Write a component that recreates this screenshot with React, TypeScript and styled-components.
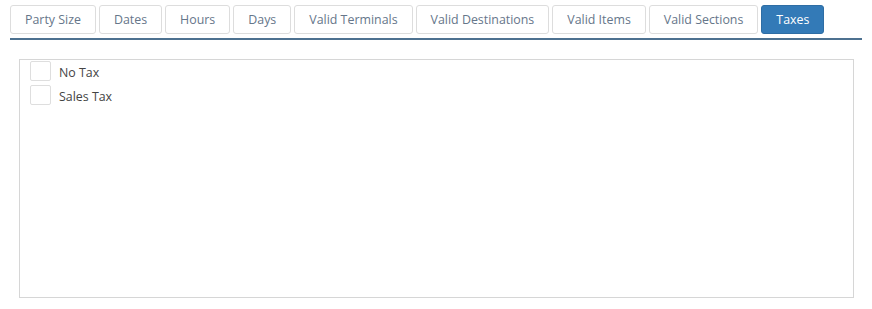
import React, { useState } from "react";
import styled, { createGlobalStyle } from "styled-components";

const GlobalStyle = createGlobalStyle`
  body {
    margin: 0;
    background: #ffffff;
    font-family: "Open Sans", "Noto Sans", sans-serif;
  }
`;

const tabs = [
  "Party Size",
  "Dates",
  "Hours",
  "Days",
  "Valid Terminals",
  "Valid Destinations",
  "Valid Items",
  "Valid Sections",
  "Taxes",
];

const taxes = ["No Tax", "Sales Tax"];

export default function App() {
  const [active, setActive] = useState("Taxes");
  const [checked, setChecked] = useState<Record<string, boolean>>({});

  return (
    <Page>
      <GlobalStyle />
      <TabBar>
        {tabs.map((t) => (
          <Tab key={t} $active={t === active} onClick={() => setActive(t)}>
            {t}
          </Tab>
        ))}
      </TabBar>
      <Panel>
        {taxes.map((t) => (
          <Row key={t}>
            <Box
              $checked={!!checked[t]}
              onClick={() => setChecked({ ...checked, [t]: !checked[t] })}
            />
            <Label>{t}</Label>
          </Row>
        ))}
      </Panel>
    </Page>
  );
}

const Page = styled.div`
  padding: 5px 10px 0 10px;
  width: 852px;
`;

const TabBar = styled.div`
  display: flex;
  flex-direction: row;
  gap: 3px;
  padding-bottom: 4px;
  border-bottom: 2px solid #4d7190;
`;

const Tab = styled.div<{ $active: boolean }>`
  height: 29px;
  box-sizing: border-box;
  padding: 0 14px;
  display: flex;
  align-items: center;
  font-size: 12.4px;
  color: ${(p) => (p.$active ? "#ffffff" : "#66768a")};
  background: ${(p) => (p.$active ? "#337ab7" : "#ffffff")};
  border: 1px solid ${(p) => (p.$active ? "#2e6da4" : "#dddddd")};
  border-radius: 3px;
  cursor: pointer;
  white-space: nowrap;
`;

const Panel = styled.div`
  margin: 19px 8px 0 9px;
  height: 239px;
  box-sizing: border-box;
  border: 1px solid #d6d6d6;
  padding: 1px 10px;
  display: flex;
  flex-direction: column;
  gap: 4px;
`;

const Row = styled.div`
  display: flex;
  flex-direction: row;
  align-items: center;
  gap: 8px;
`;

const Box = styled.div<{ $checked: boolean }>`
  width: 21px;
  height: 20px;
  box-sizing: border-box;
  border: 1px solid #dedede;
  border-radius: 2px;
  background: ${(p) => (p.$checked ? "#337ab7" : "#ffffff")};
  cursor: pointer;
`;

const Label = styled.span`
  font-size: 12.4px;
  color: #444444;
  padding-top: 2px;
`;
